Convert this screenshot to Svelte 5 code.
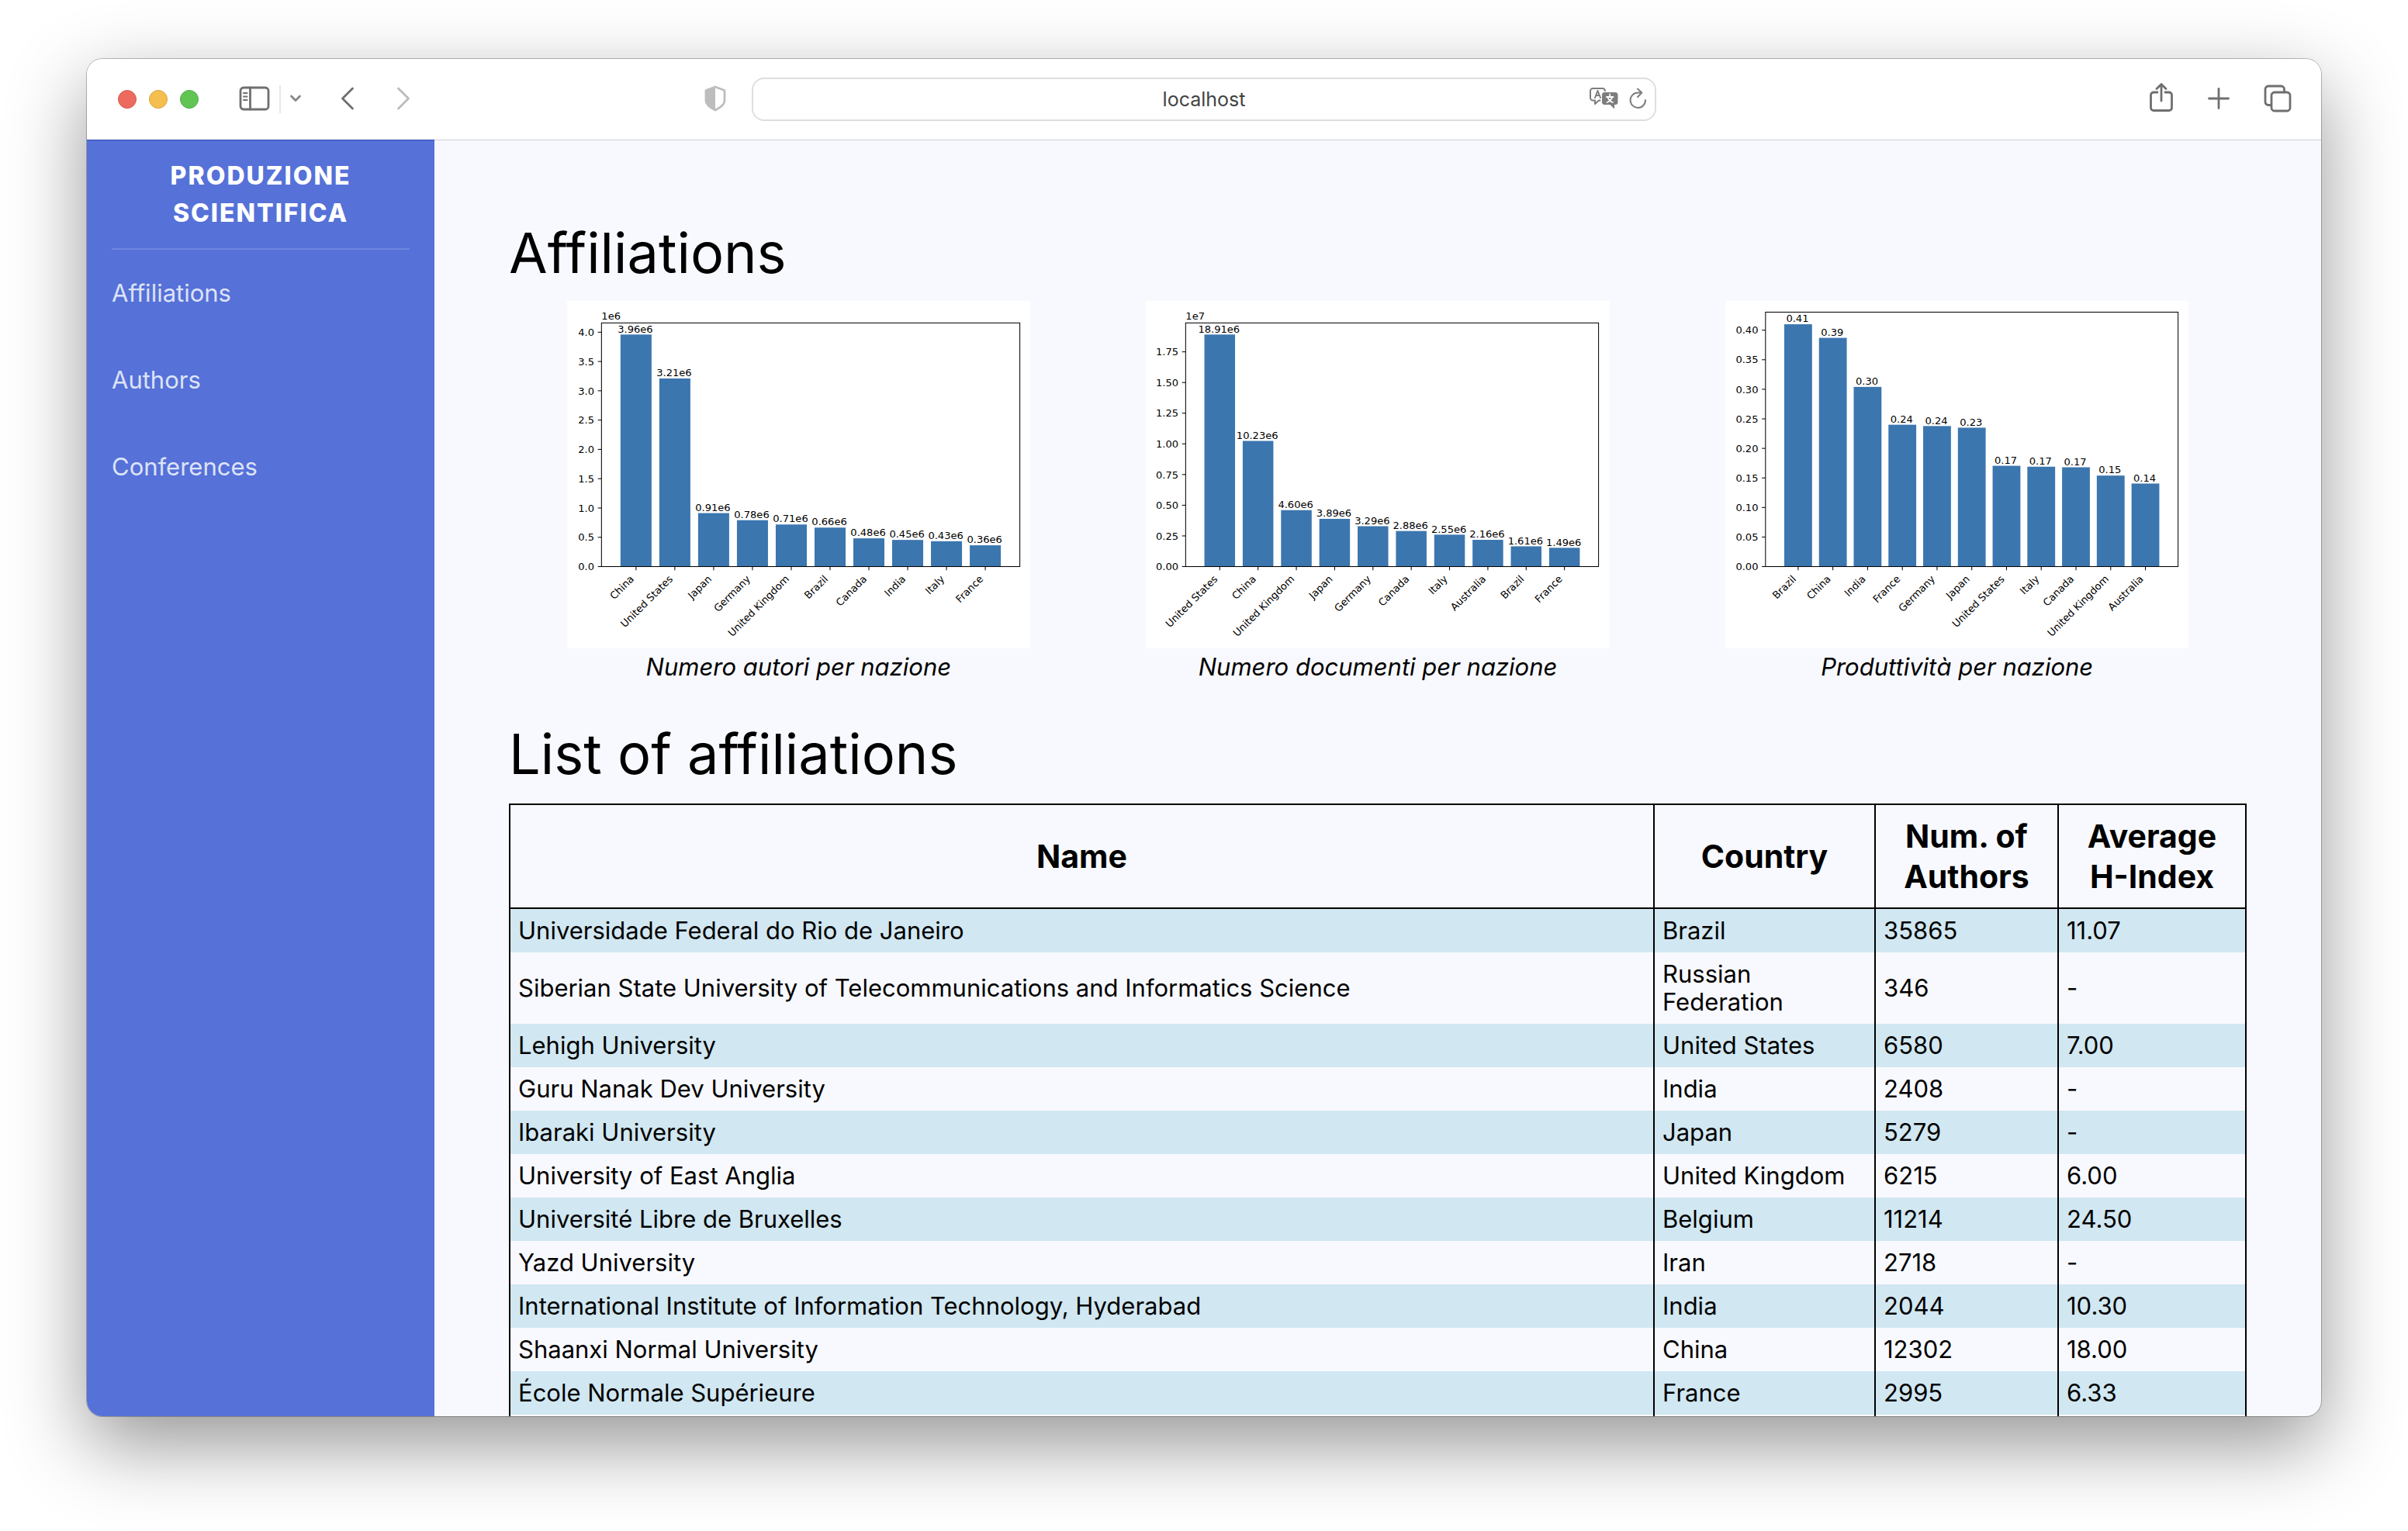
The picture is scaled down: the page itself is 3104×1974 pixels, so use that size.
<script>
  const chartBottom = 367;

  const charts = [
    {
      caption: 'Numero autori per nazione',
      exponent: '1e6',
      left: 47.5,
      top: 30.4,
      max: 3.96,
      step: 0.5,
      digits: 1,
      tickCount: 9,
      bars: [
        ['China', '3.96e6', 3.96],
        ['United States', '3.21e6', 3.21],
        ['Japan', '0.91e6', 0.913],
        ['Germany', '0.78e6', 0.792],
        ['United Kingdom', '0.71e6', 0.718],
        ['Brazil', '0.66e6', 0.665],
        ['Canada', '0.48e6', 0.482],
        ['India', '0.45e6', 0.455],
        ['Italy', '0.43e6', 0.433],
        ['France', '0.36e6', 0.363]
      ]
    },
    {
      caption: 'Numero documenti per nazione',
      exponent: '1e7',
      left: 55,
      top: 30.4,
      max: 1.891,
      step: 0.25,
      digits: 2,
      tickCount: 8,
      bars: [
        ['United States', '18.91e6', 1.891],
        ['China', '10.23e6', 1.024],
        ['United Kingdom', '4.60e6', 0.46],
        ['Japan', '3.89e6', 0.389],
        ['Germany', '3.29e6', 0.329],
        ['Canada', '2.88e6', 0.29],
        ['Italy', '2.55e6', 0.26],
        ['Australia', '2.16e6', 0.218],
        ['Brazil', '1.61e6', 0.165],
        ['France', '1.49e6', 0.153]
      ]
    },
    {
      caption: 'Produttività per nazione',
      exponent: '',
      left: 55.5,
      top: 15.5,
      max: 0.41,
      step: 0.05,
      digits: 2,
      tickCount: 9,
      bars: [
        ['Brazil', '0.41', 0.41],
        ['China', '0.39', 0.387],
        ['India', '0.30', 0.304],
        ['France', '0.24', 0.24],
        ['Germany', '0.24', 0.2378],
        ['Japan', '0.23', 0.235],
        ['United States', '0.17', 0.1705],
        ['Italy', '0.17', 0.169],
        ['Canada', '0.17', 0.168],
        ['United Kingdom', '0.15', 0.154],
        ['Australia', '0.14', 0.1405]
      ]
    }
  ].map((c) => {
    const right = 625.3;
    const unit = (right - c.left) / ((c.bars.length - 0.2) * 1.1);
    const margin = (c.bars.length - 0.2) * 0.05 + 0.4;
    const scale = (chartBottom - c.top) / 1.05 / c.max;
    return {
      ...c,
      right,
      ticks: Array.from({ length: c.tickCount }, (_, i) => ({
        label: (i * c.step).toFixed(c.digits),
        y: chartBottom - i * c.step * scale
      })),
      bars: c.bars.map(([name, label, value], i) => ({
        name,
        label,
        x: c.left + (margin + i) * unit,
        w: unit * 0.8,
        h: value * scale
      }))
    };
  });

  const links = ['Affiliations', 'Authors', 'Conferences'];

  const rows = [
    ['Universidade Federal do Rio de Janeiro', 'Brazil', '35865', '11.07'],
    ['Siberian State University of Telecommunications and Informatics Science', 'Russian Federation', '346', '-'],
    ['Lehigh University', 'United States', '6580', '7.00'],
    ['Guru Nanak Dev University', 'India', '2408', '-'],
    ['Ibaraki University', 'Japan', '5279', '-'],
    ['University of East Anglia', 'United Kingdom', '6215', '6.00'],
    ['Université Libre de Bruxelles', 'Belgium', '11214', '24.50'],
    ['Yazd University', 'Iran', '2718', '-'],
    ['International Institute of Information Technology, Hyderabad', 'India', '2044', '10.30'],
    ['Shaanxi Normal University', 'China', '12302', '18.00'],
    ['École Normale Supérieure', 'France', '2995', '6.33'],
    ['', '', '', '']
  ];
</script>

<div class="desktop">
  <div class="window">
    <header class="toolbar">
      <div class="side start">
        <div class="lights">
          <button class="light red" aria-label="Close"></button>
          <button class="light yellow" aria-label="Minimize"></button>
          <button class="light green" aria-label="Zoom"></button>
        </div>
        <button class="icon sidebar-toggle" aria-label="Show sidebar">
          <svg width="40" height="32" viewBox="0 0 40 32">
            <rect x="2" y="2" width="36" height="28" rx="4" />
            <path d="M14.500 2v28" />
            <path class="fine" d="M6 9h4.500M6 13.500h4.500M6 18h4.500" />
          </svg>
        </button>
        <span class="separator"></span>
        <button class="icon groups" aria-label="Tab groups">
          <svg width="16" height="10" viewBox="0 0 16 10"><path d="M2.500 2l5.500 5.500L13.500 2" /></svg>
        </button>
        <button class="icon back" aria-label="Back">
          <svg width="18" height="30" viewBox="0 0 18 30"><path d="M15.500 2L2.500 15l13 13" /></svg>
        </button>
        <button class="icon forward" aria-label="Forward" disabled>
          <svg width="18" height="30" viewBox="0 0 18 30"><path d="M2.500 2l13 13-13 13" /></svg>
        </button>
        <button class="icon shield" aria-label="Privacy report">
          <svg width="30" height="34" viewBox="0 0 30 34">
            <path d="M15 2L27 6.500V20c0 4-5 8.500-12 12C8 28.500 3 24 3 20V6.500z" />
            <path class="solid" d="M15 2L3 6.500V20c0 4 5 8.500 12 12z" />
          </svg>
        </button>
      </div>

      <div class="address">
        <input type="text" value="localhost" aria-label="Address" />
        <div class="tools">
          <button class="icon" aria-label="Translate">
            <svg class="translate" width="38" height="30" viewBox="0 0 38 30">
              <path d="M14.500 17.500h-1.500L8 22v-4.500H5.500A3.500 3.500 0 0 1 2 14V5.500A3.500 3.500 0 0 1 5.500 2h12A3.500 3.500 0 0 1 21 5" />
              <path d="M8 14l3.500-9L15 14M9.500 11h4" />
              <path class="solid" d="M20.500 7h13.500A3.500 3.500 0 0 1 37.500 10.500v9a3.500 3.500 0 0 1-3.500 3.500h-1v5.500L27.500 23h-7A3.500 3.500 0 0 1 17 19.500v-9A3.500 3.500 0 0 1 20.500 7z" />
              <path class="inverse" d="M27.200 9.500v3M23 13h8.500M24.500 13.500c1 3 3 5.500 6.500 6.500M30 13.500c-1 3-3 5.500-6.500 6.500" />
            </svg>
          </button>
          <button class="icon" aria-label="Reload">
            <svg class="reload" width="24" height="28" viewBox="0 0 24 28">
              <path d="M17 6.500h-4.700A9.700 9.700 0 1 0 22 16M12 1.500l5.300 5L12 12" />
            </svg>
          </button>
        </div>
      </div>

      <div class="side end">
        <button class="icon" aria-label="Share">
          <svg width="32" height="42" viewBox="0 0 32 42">
            <path d="M11 13H6a3.500 3.500 0 0 0-3.500 3.500V33A3.500 3.500 0 0 0 6 36.500h20a3.500 3.500 0 0 0 3.500-3.500V16.500A3.500 3.500 0 0 0 26 13h-5M16 24V3M10 8.500l6-6 6 6" />
          </svg>
        </button>
        <button class="icon" aria-label="New tab">
          <svg width="28" height="28" viewBox="0 0 28 28"><path d="M14 1.500v25M1.500 14h25" /></svg>
        </button>
        <button class="icon" aria-label="Tab overview">
          <svg width="36" height="36" viewBox="0 0 36 36">
            <rect x="10" y="10" width="24" height="24" rx="4" />
            <path d="M9.500 26.500H6A4 4 0 0 1 2 22.500V6a4 4 0 0 1 4-4h16.500a4 4 0 0 1 4 4v3" />
          </svg>
        </button>
      </div>
    </header>

    <div class="page">
      <nav class="sidebar">
        <a class="brand" href="#home">Produzione Scientifica</a>
        <hr />
        <ul>
          {#each links as link}
            <li><a href="#{link.toLowerCase()}">{link}</a></li>
          {/each}
        </ul>
      </nav>

      <main>
        <h1>Affiliations</h1>
        <section class="figures">
          {#each charts as c}
            <figure>
              <svg viewBox="0 0 640 480" role="img" aria-label={c.caption}>
                <rect class="paper" width="640" height="480" />
                {#each c.bars as b}
                  <rect class="bar" x={b.x - b.w / 2} y={chartBottom - b.h} width={b.w} height={b.h} />
                {/each}
                <rect class="frame" x={c.left} y={c.top} width={c.right - c.left} height={chartBottom - c.top} />
                {#each c.ticks as t}
                  <path class="tick" d="M{c.left} {t.y}h-5" />
                  <text class="end" x={c.left - 10} y={t.y + 5}>{t.label}</text>
                {/each}
                {#each c.bars as b}
                  <path class="tick" d="M{b.x} {chartBottom}v5" />
                  <text class="middle" x={b.x - 1} y={chartBottom - b.h - 3}>{b.label}</text>
                  <text class="end" transform="translate({b.x - 2} 385) rotate(-45)">{b.name}</text>
                {/each}
                <text x={c.left} y="26">{c.exponent}</text>
              </svg>
              <figcaption>{c.caption}</figcaption>
            </figure>
          {/each}
        </section>

        <h1>List of affiliations</h1>
        <table>
          <colgroup>
            <col />
            <col class="country" />
            <col class="authors" />
            <col class="hindex" />
          </colgroup>
          <thead>
            <tr>
              <th scope="col">Name</th>
              <th scope="col">Country</th>
              <th scope="col">Num. of Authors</th>
              <th scope="col">Average H-Index</th>
            </tr>
          </thead>
          <tbody>
            {#each rows as row}
              <tr>
                {#each row as cell}
                  <td>{cell}</td>
                {/each}
              </tr>
            {/each}
          </tbody>
        </table>
      </main>
    </div>
  </div>
</div>

<style>
  :global(body) {
    background: #fff;
    font-family: Inter, 'Liberation Sans', sans-serif;
    color: #000;
  }

  .desktop {
    box-sizing: border-box;
    height: 100vh;
    padding: 76px 112px 148px;
    overflow: hidden;
  }

  .window {
    display: flex;
    flex-direction: column;
    height: 100%;
    overflow: hidden;
    border-radius: 20px;
    background: #f8f9fe;
    box-shadow:
      0 0 0 1px rgba(0, 0, 0, 0.25),
      0 36px 100px rgba(0, 0, 0, 0.42);
  }

  /* Browser toolbar */
  .toolbar {
    flex: none;
    display: flex;
    align-items: center;
    height: 104px;
    padding: 0 38px;
    background: #fff;
  }

  .side {
    flex: 1 1 0;
    display: flex;
    align-items: center;
  }

  .end {
    justify-content: flex-end;
    gap: 44px;
  }

  .lights {
    display: flex;
    gap: 16px;
    margin: 0 52px 0 2px;
  }

  .light {
    width: 24px;
    height: 24px;
    padding: 0;
    border: 1px solid;
    border-radius: 50%;
  }

  .red {
    background: #ec6a5e;
    border-color: #d65a4f;
  }

  .yellow {
    background: #f4bf4f;
    border-color: #d9a440;
  }

  .green {
    background: #61c554;
    border-color: #52a842;
  }

  .icon {
    display: flex;
    padding: 0 0 2px;
    border: 0;
    background: none;
    color: #6f6f6f;
  }

  .icon svg {
    fill: none;
    stroke: currentColor;
    stroke-width: 2.8;
    stroke-linecap: round;
    stroke-linejoin: round;
  }

  .icon .fine {
    stroke-width: 2;
  }

  .icon .solid {
    fill: currentColor;
    stroke: none;
  }

  .icon .inverse {
    stroke: #fff;
    stroke-width: 1.8;
  }

  .icon .translate,
  .icon .reload {
    stroke-width: 2;
  }

  .separator {
    width: 2px;
    height: 36px;
    margin: 0 11px 0 12px;
    background: #e8e8e8;
  }

  .groups {
    color: #87878b;
  }

  .back {
    margin-left: 50px;
  }

  .forward {
    margin-left: 54px;
    color: #bbb;
  }

  .shield {
    margin-left: auto;
    margin-right: 32px;
    color: #bdbdbd;
  }

  .address {
    position: relative;
    flex: 0 1 1166px;
  }

  input {
    box-sizing: border-box;
    display: block;
    width: 100%;
    height: 56px;
    border: 2px solid #dedede;
    border-radius: 16px;
    background: #fff;
    font: 25px/32px Inter, sans-serif;
    text-align: center;
    color: #444;
  }

  .tools {
    position: absolute;
    top: 0;
    right: 12px;
    height: 100%;
    display: flex;
    align-items: center;
    gap: 13px;
  }

  .tools .icon {
    color: #7d7d7d;
  }

  /* Page */
  .page {
    flex: 1;
    min-height: 0;
    display: flex;
  }

  .sidebar {
    flex: none;
    box-sizing: border-box;
    width: 448px;
    padding: 22px 32px;
    border-top: 1px solid #2f4ab0;
    background: #5671d8;
  }

  .brand {
    display: block;
    padding: 0 64px;
    font-size: 32px;
    font-weight: 800;
    line-height: 48px;
    letter-spacing: 2px;
    text-align: center;
    text-transform: uppercase;
    text-decoration: none;
    color: #fff;
  }

  hr {
    height: 2px;
    margin: 21px 0 0;
    border: 0;
    background: #6f87e0;
  }

  ul {
    margin: 0;
    padding: 0;
    list-style: none;
  }

  li a {
    display: block;
    padding: 32px 0;
    font-size: 31px;
    line-height: 48px;
    text-decoration: none;
    color: #dde3f7;
  }

  main {
    flex: 1;
    min-width: 0;
    padding: 97px 96px 0;
    border-top: 1px solid #cfcfd4;
    overflow: hidden;
  }

  h1 {
    margin: 0;
    font-size: 72px;
    font-weight: 400;
    line-height: 96px;
  }

  .figures {
    display: flex;
    margin: 14px 0 40px;
  }

  figure {
    flex: 1 1 0;
    display: flex;
    flex-direction: column;
    align-items: center;
    margin: 0;
  }

  figure svg {
    display: block;
    width: 80%;
    font-family: 'DejaVu Sans', sans-serif;
    font-size: 14px;
  }

  .paper {
    fill: #fff;
  }

  .bar {
    fill: #3b76af;
  }

  .frame {
    fill: none;
    stroke: #000;
    stroke-width: 1.1;
  }

  .tick {
    stroke: #000;
    stroke-width: 1.1;
  }

  text.end {
    text-anchor: end;
  }

  .middle {
    text-anchor: middle;
  }

  figcaption {
    font-size: 31px;
    font-style: italic;
    line-height: 48px;
  }

  table {
    width: 100%;
    margin-top: 16px;
    border: 2px solid #000;
    border-collapse: collapse;
    table-layout: fixed;
  }

  .country {
    width: 285px;
  }

  .authors {
    width: 236px;
  }

  .hindex {
    width: 242px;
  }

  th {
    padding: 14px 10px;
    border: 2px solid #000;
    font-size: 41px;
    font-weight: 700;
    line-height: 52px;
  }

  td {
    padding: 10px;
    border: solid #000;
    border-width: 0 2px;
    font-size: 31px;
    line-height: 36px;
  }

  tbody tr:nth-child(odd) {
    background: #d1e7f1;
  }
</style>
